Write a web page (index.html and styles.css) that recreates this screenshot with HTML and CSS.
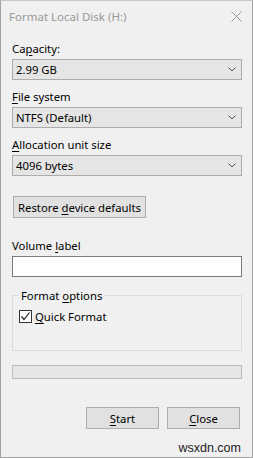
FILE: index.html
```html
<!DOCTYPE html>
<html lang="en">
    <head>
        <meta charset="UTF-8">
        <meta name="viewport" content="width=device-width, initial-scale=1.0">
        <title>Format Local Disk (H:)</title>
        <link rel="stylesheet" href="styles.css">
    </head>
    <body>
        <div class="window">
            <div class="titlebar">
                <span class="title">Format Local Disk (H:)</span>
                <svg class="close-x" width="11" height="11" viewBox="0 0 11 11">
                    <path d="M0.5 0.5 L10.5 10.5 M10.5 0.5 L0.5 10.5" stroke="#999" stroke-width="1" fill="none"/>
                </svg>
            </div>
            <div class="content">
                <div class="label">Ca<u>p</u>acity:</div>
                <div class="combo">
                    <span>2.99 GB</span>
                    <svg width="8" height="5" viewBox="0 0 8 5"><polyline points="0.5,0.5 4,4 7.5,0.5" stroke="#555" fill="none"/></svg>
                </div>

                <div class="label"><u>F</u>ile system</div>
                <div class="combo">
                    <span>NTFS (Default)</span>
                    <svg width="8" height="5" viewBox="0 0 8 5"><polyline points="0.5,0.5 4,4 7.5,0.5" stroke="#555" fill="none"/></svg>
                </div>

                <div class="label"><u>A</u>llocation unit size</div>
                <div class="combo">
                    <span>4096 bytes</span>
                    <svg width="8" height="5" viewBox="0 0 8 5"><polyline points="0.5,0.5 4,4 7.5,0.5" stroke="#555" fill="none"/></svg>
                </div>

                <button class="btn restore">Restore <u>d</u>evice defaults</button>

                <div class="label">Volume <u>l</u>abel</div>
                <input type="text" class="textbox">

                <fieldset class="group">
                    <legend>Format <u>o</u>ptions</legend>
                    <label class="check-row">
                        <span class="checkbox">
                            <svg width="11" height="11" viewBox="0 0 11 11"><polyline points="1.5,5.5 4,8.5 9.5,1.5" stroke="#222" stroke-width="1.2" fill="none"/></svg>
                        </span>
                        <span><u>Q</u>uick Format</span>
                    </label>
                </fieldset>

                <div class="progress"></div>

                <div class="actions">
                    <button class="btn action"><u>S</u>tart</button>
                    <button class="btn action"><u>C</u>lose</button>
                </div>

                <div class="watermark">wsxdn.com</div>
            </div>
        </div>
    </body>
</html>
```

FILE: styles.css
```css
body {
    margin: 0;
    background-color: #f0f0f0;
    font-family: "Noto Sans", "Open Sans", sans-serif;
    font-size: 11.3px;
    color: #000;
}
.window {
    width: 253px;
    height: 458px;
    box-sizing: border-box;
    border: 1px solid #a3a3a3;
    border-top-color: #c8c8c8;
    background-color: #f0f0f0;
}
.titlebar {
    height: 30px;
    display: flex;
    align-items: center;
    justify-content: space-between;
    padding: 0 10px 0 8px;
}
.title {
    color: #999;
    line-height: 15px;
    font-size: 11.5px;
}
.close-x {
    display: block;
}
.content {
    padding: 10px 10px 0 11px;
}
u {
    text-decoration: underline;
    text-underline-offset: 2px;
}
.label {
    line-height: 15px;
    margin-bottom: 3px;
}
.combo {
    height: 21px;
    box-sizing: border-box;
    border: 1px solid #acacac;
    background-color: #e5e5e5;
    display: flex;
    align-items: center;
    justify-content: space-between;
    padding: 0 5px 0 3px;
    margin-bottom: 9px;
}
.btn {
    font-family: inherit;
    font-size: inherit;
    color: #000;
    background-color: #e1e1e1;
    border: 1px solid #adadad;
    height: 22px;
    padding: 0;
    border-radius: 0;
}
.restore {
    display: block;
    width: 133px;
    margin: 20px 0 20px 1px;
}
.textbox {
    display: block;
    width: 230px;
    height: 21px;
    box-sizing: border-box;
    border: 1px solid #7a7a7a;
    background-color: #fff;
    margin: 2px 0 0 0;
    padding: 0;
}
.group {
    margin: 11px 0 0 0;
    padding: 6px 6px 26px 6px;
    border: 1px solid #dcdcdc;
}
.group legend {
    padding: 0 2px;
    line-height: 15px;
}
.check-row {
    display: flex;
    align-items: center;
    height: 15px;
    gap: 3px;
    padding-left: 0;
}
.checkbox {
    width: 13px;
    height: 13px;
    box-sizing: border-box;
    border: 1px solid #333;
    background-color: #fff;
    display: flex;
    align-items: center;
    justify-content: center;
}
.progress {
    height: 14px;
    box-sizing: border-box;
    margin-top: 14px;
    border: 1px solid #bcbcbc;
    background-color: #e6e6e6;
}
.actions {
    display: flex;
    justify-content: flex-end;
    gap: 8px;
    margin-top: 28px;
    padding-right: 2px;
}
.action {
    width: 73px;
}
.watermark {
    margin-top: 12px;
    text-align: right;
    font-family: "Liberation Sans", Arial, sans-serif;
    font-size: 12.5px;
    line-height: 15px;
    color: #222;
    padding-right: 1px;
}
```
